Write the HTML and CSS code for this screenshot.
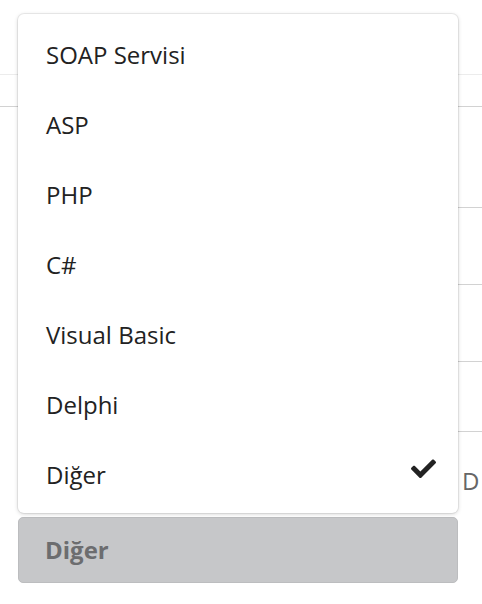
FILE: index.html
```html
<!DOCTYPE html>
<html lang="tr">
<head>
<meta charset="utf-8">
<link rel="stylesheet" href="styles.css">
<title>Seçim</title>
</head>
<body>
<div class="page">
  <div class="bg">
    <div class="row r1"></div>
    <div class="row r2"></div>
    <div class="row r3"></div>
    <div class="row r4"></div>
    <div class="row r5"></div>
    <div class="row r6"></div>
    <div class="row r7"><span class="peek">D</span></div>
  </div>
  <button class="select" type="button">Diğer</button>

  <ul class="menu">
    <li class="item">SOAP Servisi</li>
    <li class="item">ASP</li>
    <li class="item">PHP</li>
    <li class="item">C#</li>
    <li class="item">Visual Basic</li>
    <li class="item">Delphi</li>
    <li class="item selected">Diğer
      <svg class="check" viewBox="0 0 512 400" width="25" height="20" aria-hidden="true"><path d="M173.898 399.404l-166.4-166.4c-9.997-9.997-9.997-26.206 0-36.204l36.203-36.204c9.997-9.998 26.207-9.998 36.204 0L192 272.69 432.095 32.596c9.997-9.997 26.207-9.997 36.204 0l36.203 36.204c9.997 9.997 9.997 26.206 0 36.204l-294.4 294.401c-9.998 9.997-26.207 9.997-36.204-.001z"/></svg>
    </li>
  </ul>
</div>
</body>
</html>
```
FILE: styles.css
```css
html, body {
  margin: 0;
  padding: 0;
  background: #ffffff;
}
body {
  font-family: "Open Sans", "Noto Sans", sans-serif;
  width: 482px;
  height: 604px;
  overflow: hidden;
}
.page {
  position: relative;
  width: 482px;
  height: 604px;
}
.bg {
  display: flex;
  flex-direction: column;
}
.row {
  box-sizing: border-box;
}
.r1 { height: 75px; border-bottom: 1px solid #ececec; }
.r2 { height: 32px; border-bottom: 1px solid #d2d2d2; }
.r3 { height: 101px; border-bottom: 1px solid #d2d2d2; margin-left: 458px; }
.r4 { height: 77px; border-bottom: 1px solid #d2d2d2; margin-left: 458px; }
.r5 { height: 77px; border-bottom: 1px solid #d2d2d2; margin-left: 458px; }
.r6 { height: 70px; border-bottom: 1px solid #d2d2d2; margin-left: 458px; }
.r7 {
  height: 85px;
  margin-left: 458px;
  display: flex;
  align-items: center;
}
.peek {
  font-size: 24px;
  color: #666666;
  padding-left: 4px;
  margin-top: 12px;
}
.select {
  display: block;
  box-sizing: border-box;
  margin: 0 0 0 18px;
  width: 440px;
  height: 66px;
  background: #c6c7c9;
  border: 1px solid #bcbdbf;
  border-radius: 5px;
  font-family: "Open Sans", "Noto Sans", sans-serif;
  font-weight: 700;
  font-size: 24px;
  color: #6c6d6f;
  text-align: left;
  padding: 0 0 2px 26px;
}
.menu {
  position: absolute;
  left: 18px;
  top: 14px;
  width: 440px;
  box-sizing: border-box;
  margin: 0;
  padding: 5px 0 4px;
  list-style: none;
  background: #ffffff;
  border-radius: 6px;
  box-shadow: 0 0 0 1px rgba(0,0,0,0.06), 0 1px 4px rgba(0,0,0,0.18);
}
.item {
  height: 70px;
  display: flex;
  align-items: center;
  justify-content: space-between;
  padding: 0 22px 0 28px;
  font-size: 24px;
  color: #222222;
}
.check {
  fill: #222222;
  margin-top: -12px;
}
```
